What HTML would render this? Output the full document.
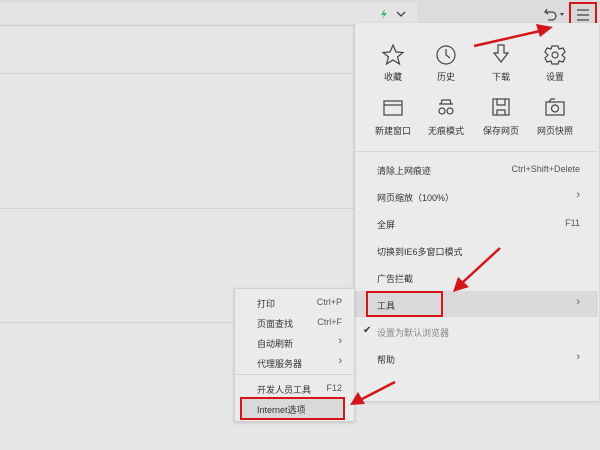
<!DOCTYPE html>
<html><head><meta charset="utf-8"><style>
body{margin:0;width:600px;height:450px;overflow:hidden;background:#e6e6e6;font-family:"Liberation Sans","Noto Sans CJK SC",sans-serif;font-size:9px;color:#333;position:relative}
.a{position:absolute}
.line{position:absolute;left:0;height:1px;background:#d2d2d2}
.mi{position:absolute;left:377px;font-size:9px}
.sc{position:absolute;right:20px;font-size:9px;color:#555}
.lbl{position:absolute;width:60px;text-align:center;font-size:9px}
.si{position:absolute;left:257px;font-size:9px}
.ss{position:absolute;left:300px;width:42px;text-align:right;font-size:9px;color:#555}
.red{position:absolute;border:2px solid #d4161c;box-sizing:border-box}
</style></head><body>
<div class="a" style="left:0;top:0;width:600px;height:25px;background:#dcdcdc"></div>
<div class="a" style="left:0;top:3px;width:417px;height:21px;background:#e4e4e4"></div>
<div class="line" style="top:25px;width:600px;background:#cfcfcf"></div>
<div class="line" style="top:73px;width:354px"></div>
<div class="line" style="top:208px;width:354px"></div>
<div class="line" style="top:322px;width:354px"></div>
<svg class="a" style="left:378px;top:8px" width="32" height="12"><path d="M7 1 L3 7 L6 7 L4 11 L9 5 L6 5 Z" fill="#2fbf62"/><path d="M19 4 L23 8 L27 4" stroke="#444" fill="none" stroke-width="1.3"/></svg>
<svg class="a" style="left:543px;top:6px" width="24" height="16"><path d="M4 3 L2 6 L5 8 M2 6 H9 a4 4 0 0 1 0 8 H5" stroke="#444" fill="none" stroke-width="1.2"/><path d="M17 7 L21 7 L19 10 Z" fill="#444"/></svg>
<div class="a" style="left:569px;top:2px;width:28px;height:25px;background:#d8d8d8"></div>
<svg class="a" style="left:576px;top:8px" width="14" height="14"><path d="M1 2H13M1 7H13M1 12H13" stroke="#444" stroke-width="1.2"/></svg>
<div class="red" style="left:569px;top:2px;width:28px;height:25px"></div>
<!-- main menu -->
<div class="a" style="left:354px;top:23px;width:244px;height:378px;background:#ebebeb;border-left:1px solid #cfcfcf;box-shadow:0 1px 3px rgba(0,0,0,.15)"></div>
<svg class="a" style="left:355px;top:40px" width="240" height="85" fill="none" stroke="#444" stroke-width="1.2">
<path d="M38 5 L41 12 L48 12.5 L42.5 17 L44.5 24 L38 20 L31.5 24 L33.5 17 L28 12.5 L35 12 Z"/>
<circle cx="91" cy="15" r="9"/><path d="M91 9V15L95 18"/>
<path d="M143 5H149V13H153L146 22L139 13H143Z"/>
<circle cx="200" cy="15" r="3"/><path d="M197 6L203 6L204 9L208 8L210 12L207 15L210 18L208 22L204 21L203 24H197L196 21L192 22L190 18L193 15L190 12L192 8L196 9Z"/>
<rect x="29" y="61" width="18" height="14"/><path d="M29 65H47"/>
<path d="M84 64H98M86 64L87 60H95L96 64"/><circle cx="87" cy="71" r="3"/><circle cx="95" cy="71" r="3"/>
<rect x="138" y="59" width="16" height="16"/><path d="M142 59V65H150V59M142 75V70H150V75"/>
<rect x="191" y="62" width="18" height="13"/><circle cx="200" cy="68.5" r="3.5"/><path d="M194 62L196 59H200"/>
</svg>
<div class="lbl" style="left:363px;top:70px">收藏</div>
<div class="lbl" style="left:416px;top:70px">历史</div>
<div class="lbl" style="left:471px;top:70px">下载</div>
<div class="lbl" style="left:525px;top:70px">设置</div>
<div class="lbl" style="left:363px;top:124px">新建窗口</div>
<div class="lbl" style="left:416px;top:124px">无痕模式</div>
<div class="lbl" style="left:471px;top:124px">保存网页</div>
<div class="lbl" style="left:525px;top:124px">网页快照</div>
<div class="a" style="left:355px;top:151px;width:243px;height:1px;background:#d6d6d6"></div>
<div class="mi" style="top:164px">清除上网痕迹</div><div class="sc" style="top:164px">Ctrl+Shift+Delete</div>
<div class="mi" style="top:191px">网页缩放（100%）</div><div class="sc" style="top:189px;font-size:11px">›</div>
<div class="mi" style="top:218px">全屏</div><div class="sc" style="top:218px">F11</div>
<div class="mi" style="top:245px">切换到IE6多窗口模式</div>
<div class="mi" style="top:272px">广告拦截</div>
<div class="a" style="left:355px;top:291px;width:243px;height:26px;background:#d9d9d9"></div>
<div class="mi" style="top:299px">工具</div><div class="sc" style="top:296px;font-size:11px">›</div>
<div class="red" style="left:366px;top:291px;width:77px;height:26px"></div>
<div class="a" style="left:363px;top:325px;font-size:10px">✔</div>
<div class="mi" style="top:326px;color:#888">设置为默认浏览器</div>
<div class="mi" style="top:353px">帮助</div><div class="sc" style="top:351px;font-size:11px">›</div>
<!-- submenu -->
<div class="a" style="left:234px;top:288px;width:121px;height:134px;background:#ebebeb;border:1px solid #d0d0d0;box-sizing:border-box;box-shadow:0 1px 3px rgba(0,0,0,.15)"></div>
<div class="si" style="top:297px">打印</div><div class="ss" style="top:297px">Ctrl+P</div>
<div class="si" style="top:317px">页面查找</div><div class="ss" style="top:317px">Ctrl+F</div>
<div class="si" style="top:337px">自动刷新</div><div class="ss" style="top:335px;font-size:11px">›</div>
<div class="si" style="top:357px">代理服务器</div><div class="ss" style="top:355px;font-size:11px">›</div>
<div class="a" style="left:236px;top:374px;width:117px;height:1px;background:#d4d4d4"></div>
<div class="si" style="top:383px">开发人员工具</div><div class="ss" style="top:383px">F12</div>
<div class="a" style="left:240px;top:397px;width:105px;height:23px;background:#d9d9d9"></div>
<div class="si" style="top:403px">Internet选项</div>
<div class="red" style="left:240px;top:397px;width:105px;height:23px"></div>
<!-- arrows -->
<svg class="a" style="left:0;top:0" width="600" height="450">
<g stroke="#d4161c" stroke-width="2.5" fill="#d4161c">
<line x1="474" y1="46" x2="540" y2="31"/><path d="M553 27 L536 24 L540 37 Z" stroke="none"/>
<line x1="500" y1="248" x2="462" y2="283"/><path d="M453 292 L458 277 L469 287 Z" stroke="none"/>
<line x1="395" y1="382" x2="362" y2="399"/><path d="M350 405 L358 392 L365 404 Z" stroke="none"/>
</g></svg>
</body></html>
